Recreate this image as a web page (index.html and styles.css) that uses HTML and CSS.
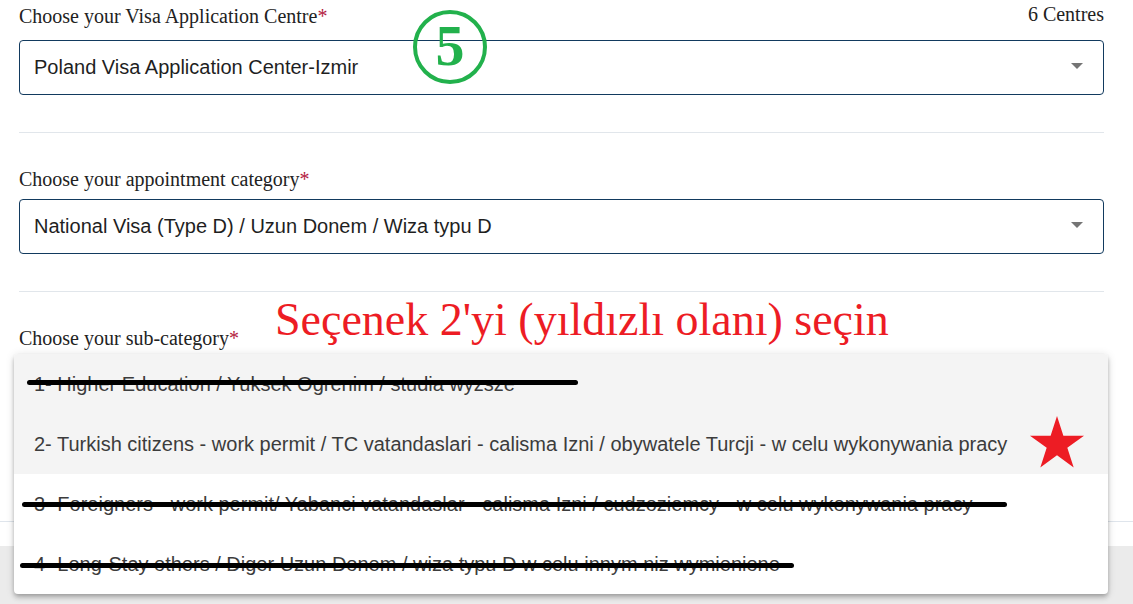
FILE: index.html
```html
<!DOCTYPE html>
<html lang="en">
<head>
<meta charset="utf-8">
<title>Choose your Visa Application Centre</title>
<link rel="stylesheet" href="styles.css">
</head>
<body>
<div class="card">
  <div class="field">
    <div class="field-head">
      <label class="label">Choose your Visa Application Centre<span class="req">*</span></label>
      <span class="count">6 Centres</span>
    </div>
    <div class="select"><span class="value">Poland Visa Application Center-Izmir</span><span class="caret"></span></div>
  </div>
  <hr class="divider">
  <div class="field">
    <label class="label label-gap">Choose your appointment category<span class="req">*</span></label>
    <div class="select"><span class="value">National Visa (Type D) / Uzun Donem / Wiza typu D</span><span class="caret"></span></div>
  </div>
  <hr class="divider">
  <div class="field field-open">
    <label class="label label-gap">Choose your sub-category<span class="req">*</span></label>
    <div class="select"><span class="value"></span><span class="caret"></span></div>
    <ul class="menu">
      <li class="option option-grey">1- Higher Education / Yuksek Ogrenim / studia wyzsze<span class="strike strike-1"></span></li>
      <li class="option option-grey option-pick">2- Turkish citizens - work permit / TC vatandaslari - calisma Izni / obywatele Turcji - w celu wykonywania pracy
        <svg class="star" width="58" height="57" viewBox="0 0 58 57"><polygon fill="#ed1c24" points="29,0.1 35.38,19.72 56.01,19.72 39.32,31.85 45.69,51.48 29,39.35 12.31,51.48 18.68,31.85 1.99,19.72 22.62,19.72"/></svg>
      </li>
      <li class="option">3- Foreigners - work permit/ Yabanci vatandaslar - calisma Izni / cudzoziemcy - w celu wykonywania pracy<span class="strike strike-3"></span></li>
      <li class="option">4- Long-Stay others / Diger Uzun Donem / wiza typu D w celu innym niz wymienione<span class="strike strike-4"></span></li>
    </ul>
  </div>
  <div class="step-badge">5</div>
  <div class="note">Seçenek 2'yi (yıldızlı olanı) seçin</div>
</div>
<div class="footer"></div>
</body>
</html>
```

FILE: styles.css
```css
* { box-sizing: border-box; }
html, body { margin: 0; padding: 0; background: #ffffff; }
body { width: 1133px; height: 604px; overflow: hidden; font-family: "Liberation Serif", "Times New Roman", serif; }

.card {
  position: relative;
  padding: 5px 29px 108px 19px;
  border-bottom: 1px solid #dfe5ec;
  background: #ffffff;
}

.field { position: relative; }

.field-head {
  display: flex;
  justify-content: space-between;
  align-items: flex-start;
  margin-bottom: 12px;
}

.label {
  display: block;
  font-size: 20px;
  line-height: 23px;
  color: #222222;
}
.label-gap { margin-bottom: 8px; }
.req { color: #b3203e; }

.count {
  font-size: 20px;
  line-height: 23px;
  color: #222222;
  margin-top: -2px;
}

.select {
  display: flex;
  align-items: center;
  justify-content: space-between;
  height: 55px;
  padding: 0 20px 0 14px;
  border: 1px solid #123a5e;
  border-radius: 4px;
  font-family: "Liberation Sans", Arial, sans-serif;
  font-size: 20px;
  color: #1f1f1f;
}

.caret {
  width: 0;
  height: 0;
  border-left: 6px solid transparent;
  border-right: 6px solid transparent;
  border-top: 6px solid #757575;
  margin-top: -3px;
}

.divider {
  margin: 37px 0 35px;
  border: 0;
  border-top: 1px solid #e1e6eb;
  height: 0;
}

.menu {
  position: absolute;
  top: 27px;
  left: -5px;
  width: 1094px;
  margin: 0;
  padding: 0;
  list-style: none;
  background: #ffffff;
  border-radius: 4px;
  overflow: hidden;
  box-shadow: 0 2px 4px -1px rgba(0,0,0,0.2), 0 4px 5px 0 rgba(0,0,0,0.14), 0 1px 10px 0 rgba(0,0,0,0.12);
  z-index: 2;
}

.option {
  position: relative;
  display: flex;
  align-items: center;
  justify-content: space-between;
  height: 60px;
  padding: 0 22px 0 20px;
  font-family: "Liberation Sans", Arial, sans-serif;
  font-size: 20px;
  color: #3c3c3c;
  white-space: nowrap;
}
.option-grey { background: #f4f4f4; }

.star { display: block; flex: none; }

.strike {
  position: absolute;
  height: 5px;
  background: #000000;
  border-radius: 3px;
}
.strike-1 { left: 13px; width: 551px; top: 26px; }
.strike-3 { left: 8px; width: 985px; top: 28px; }
.strike-4 { left: 6px; width: 774px; top: 29px; }

.step-badge {
  position: absolute;
  left: 413px;
  top: 10px;
  width: 74px;
  height: 74px;
  border: 4px solid #22b14c;
  border-radius: 50%;
  display: flex;
  align-items: center;
  justify-content: center;
  font-family: "Liberation Serif", "Times New Roman", serif;
  font-weight: bold;
  font-size: 58px;
  line-height: 1;
  color: #22b14c;
  padding-bottom: 2px;
}

.note {
  position: absolute;
  left: 275px;
  top: 297px;
  font-family: "Liberation Serif", "Times New Roman", serif;
  font-size: 46px;
  line-height: 46px;
  color: #ed1c24;
  white-space: nowrap;
}

.footer {
  height: 59px;
  margin-top: 24px;
  background: #ebebeb;
}
```
